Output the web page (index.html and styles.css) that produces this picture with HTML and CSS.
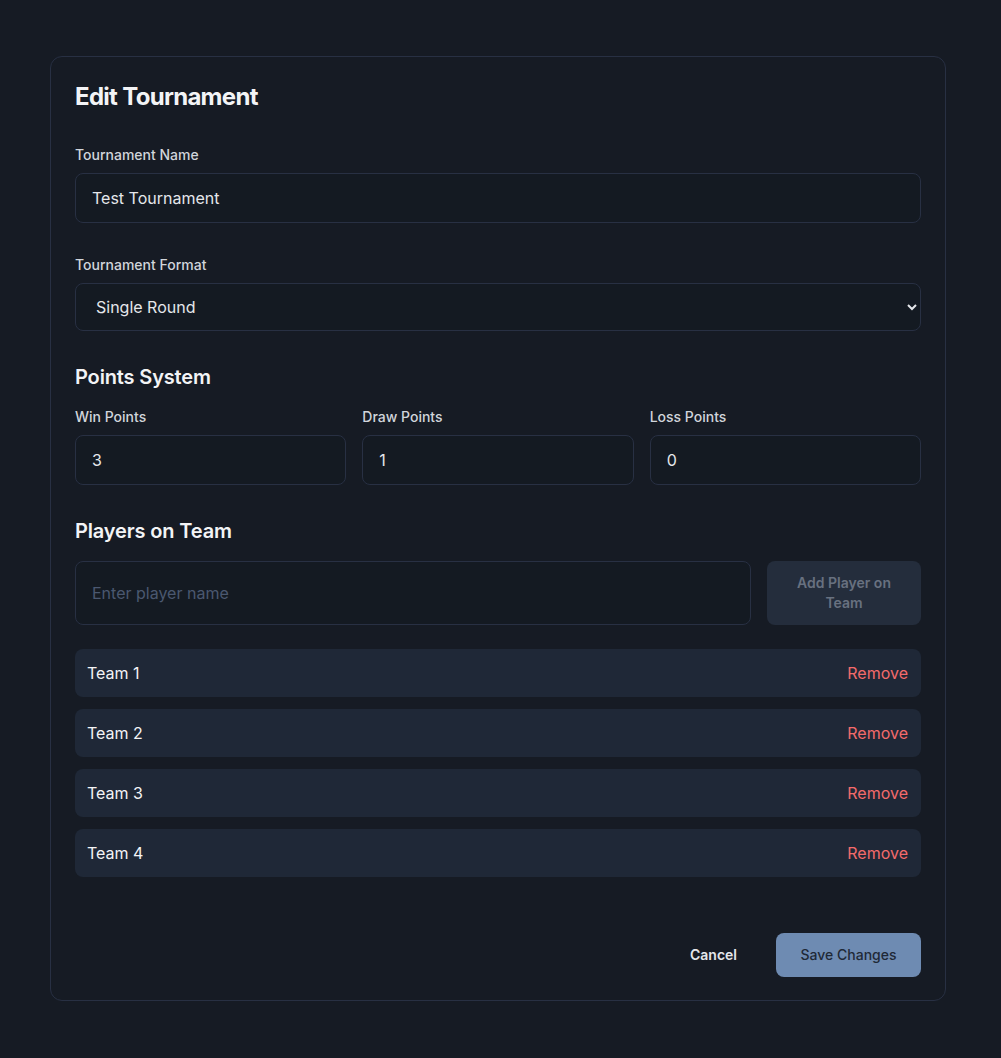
FILE: index.html
```html
<!DOCTYPE html>
<html lang="en">
<head>
<meta charset="utf-8">
<title>Edit Tournament</title>
<link rel="stylesheet" href="styles.css">
</head>
<body>
<main class="page">
  <section class="card">
    <h1 class="title">Edit Tournament</h1>

    <div class="field">
      <label class="label">Tournament Name</label>
      <input class="input" type="text" value="Test Tournament">
    </div>

    <div class="field">
      <label class="label">Tournament Format</label>
      <select class="input select">
        <option>Single Round</option>
        <option>Double Round</option>
      </select>
    </div>

    <h2 class="section-title">Points System</h2>
    <div class="points">
      <div class="point">
        <label class="label">Win Points</label>
        <input class="input" type="text" value="3">
      </div>
      <div class="point">
        <label class="label">Draw Points</label>
        <input class="input" type="text" value="1">
      </div>
      <div class="point">
        <label class="label">Loss Points</label>
        <input class="input" type="text" value="0">
      </div>
    </div>

    <h2 class="section-title">Players on Team</h2>
    <div class="add-row">
      <input class="input add-input" type="text" placeholder="Enter player name">
      <button class="add-btn">Add Player on Team</button>
    </div>

    <ul class="teams">
      <li class="team"><span>Team 1</span><button class="remove">Remove</button></li>
      <li class="team"><span>Team 2</span><button class="remove">Remove</button></li>
      <li class="team"><span>Team 3</span><button class="remove">Remove</button></li>
      <li class="team"><span>Team 4</span><button class="remove">Remove</button></li>
    </ul>

    <div class="actions">
      <button class="cancel">Cancel</button>
      <button class="save">Save Changes</button>
    </div>
  </section>
</main>
</body>
</html>
```

FILE: styles.css
```css
* { box-sizing: border-box; }
html { color-scheme: dark; }
body {
  margin: 0;
  background: #161b24;
  font-family: Inter, "Noto Sans", "Liberation Sans", sans-serif;
  color: #f3f4f6;
}
.page {
  padding: 56px 0 56px 50px;
}
.card {
  width: 896px;
  border: 1px solid #283043;
  border-radius: 12px;
  padding: 24px 24px 23px;
  background: #161b24;
}
.title {
  margin: 0 0 32px;
  font-size: 24px;
  line-height: 32px;
  font-weight: 700;
  letter-spacing: -0.7px;
  color: #f3f4f6;
}
.field { margin-bottom: 32px; }
.label {
  display: block;
  font-size: 14px;
  line-height: 20px;
  font-weight: 500;
  color: #d1d5db;
  margin-bottom: 8px;
}
.input {
  display: block;
  width: 100%;
  height: 50px;
  padding: 12px 16px;
  font-family: inherit;
  font-size: 16px;
  line-height: 24px;
  color: #e5e7eb;
  background: #141a22;
  border: 1px solid #283043;
  border-radius: 8px;
  outline: none;
}
.select { height: 48px; }
.input::placeholder { color: #4b5870; }
.section-title {
  margin: 0 0 16px;
  font-size: 20px;
  line-height: 28px;
  font-weight: 600;
  letter-spacing: -0.15px;
  color: #f3f4f6;
}
.points {
  display: grid;
  grid-template-columns: repeat(3, 1fr);
  gap: 16px;
  margin-bottom: 32px;
}
.add-row {
  display: flex;
  gap: 16px;
  margin-bottom: 24px;
}
.add-input { flex: 1; height: 64px; }
.add-btn {
  width: 154px;
  padding: 12px 16px;
  font-family: inherit;
  font-size: 14px;
  line-height: 20px;
  font-weight: 600;
  color: #687180;
  background: #242d3c;
  border: none;
  border-radius: 8px;
}
.teams {
  list-style: none;
  margin: 0 0 56px;
  padding: 0;
  display: flex;
  flex-direction: column;
  gap: 12px;
}
.team {
  display: flex;
  justify-content: space-between;
  align-items: center;
  padding: 12px 13px 12px 12px;
  background: #1f2837;
  border-radius: 8px;
  font-size: 16px;
  line-height: 24px;
  color: #f3f4f6;
}
.remove {
  background: none;
  border: none;
  padding: 0;
  font-family: inherit;
  font-size: 16px;
  line-height: 24px;
  color: #f36b6b;
}
.actions {
  display: flex;
  justify-content: flex-end;
  gap: 15px;
}
.cancel {
  padding: 12px 24px;
  background: none;
  border: none;
  font-family: inherit;
  font-size: 14px;
  line-height: 20px;
  font-weight: 600;
  color: #e5e7eb;
}
.save {
  width: 145px;
  padding: 12px 0;
  background: #6e8bb2;
  border: none;
  border-radius: 8px;
  font-family: inherit;
  font-size: 14px;
  line-height: 20px;
  font-weight: 500;
  color: #1f2937;
}
```
